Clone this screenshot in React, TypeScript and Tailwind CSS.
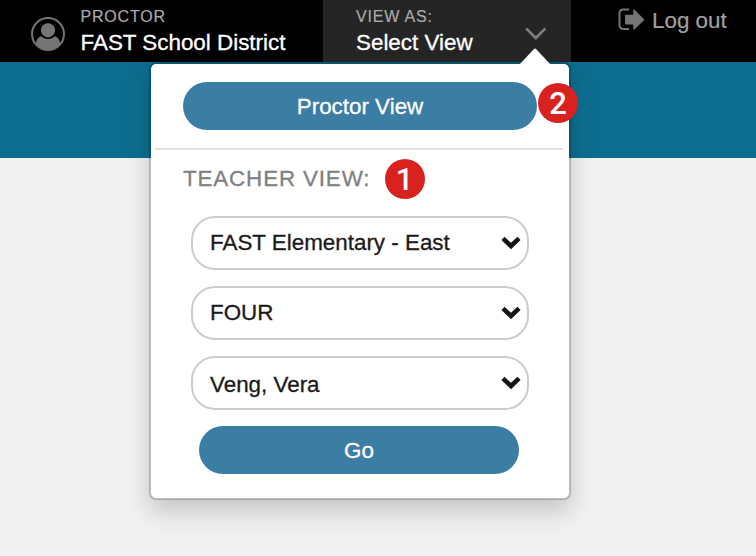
import React from "react";

function UserIcon() {
  return (
    <svg className="block h-[34px] w-[34px] shrink-0" viewBox="0 0 34 34">
      <circle cx="17" cy="17" r="16" fill="none" stroke="#757575" strokeWidth="2" />
      <circle cx="17" cy="13.3" r="7.1" fill="#757575" />
      <path
        d="M4.8 27.5C5.2 22.8 7 20 10.4 19.3C12 21 14.3 21.9 17 21.9C19.7 21.9 22 21 23.6 19.3C27 20 28.8 22.8 29.2 27.5C26.2 31.5 21.8 33.5 17 33.5C12.2 33.5 7.8 31.5 4.8 27.5Z"
        fill="#757575"
      />
    </svg>
  );
}

function LogoutIcon() {
  return (
    <svg className="block h-[23px] w-[27px] shrink-0" viewBox="0 0 27 23">
      <path d="M11 1.6H5.5C2.9 1.6 1.5 3 1.5 5.5V17C1.5 19.5 2.9 21 5.5 21H11" fill="none" stroke="#757575" strokeWidth="2" />
      <path
        d="M8 6.8H15.2V2.4C15.2 1.4 16 1.2 16.6 1.8L25.8 10.9C26.4 11.4 26.4 11.9 25.8 12.4L16.6 21.3C16 21.9 15.2 21.7 15.2 20.7V16.4H8C7.3 16.4 7 16.1 7 15.5V7.7C7 7.1 7.3 6.8 8 6.8Z"
        fill="#757575"
      />
    </svg>
  );
}

function Field({ label, low = false }: { label: string; low?: boolean }) {
  return (
    <div className="flex h-[54px] w-[338px] items-center justify-between rounded-[24px] border-2 border-[#ccc] bg-white pl-[17px] pr-[6px] text-[22.4px] leading-[26px] text-[#1a1a1a] [-webkit-text-stroke:0.3px]">
      <span className={low ? "pt-[3px]" : "pb-px"}>{label}</span>
      <svg className="block h-[14px] w-[20px]" viewBox="0 0 20 14">
        <path d="M2 2.4L10 10L18 2.4" fill="none" stroke="#151515" strokeWidth="4.6" />
      </svg>
    </div>
  );
}

function Badge({ value }: { value: string }) {
  return (
    <span className="flex h-10 w-10 items-center justify-center rounded-full bg-[#d9221f] font-['Roboto','Liberation_Sans',sans-serif] text-[31px] font-medium leading-none text-white">
      {value}
    </span>
  );
}

export default function App() {
  return (
    <div className="relative h-[556px] w-[756px] overflow-hidden bg-[#f1f1f1] font-['Liberation_Sans',Arial,sans-serif]">
      <header className="flex h-[62px] bg-black">
        <div className="flex w-[323px] pl-[31px] pt-[7px]">
          <div className="pt-[10px]">
            <UserIcon />
          </div>
          <div className="pl-[15.5px]">
            <div className="text-[16px] leading-[19px] tracking-[0.8px] text-[#a9a9a9] [-webkit-text-stroke:0.2px]">PROCTOR</div>
            <div className="whitespace-nowrap pt-[4px] text-[22.4px] leading-[26px] text-white [-webkit-text-stroke:0.3px]">FAST School District</div>
          </div>
        </div>
        <div className="flex w-[248px] justify-between bg-[#252525] pl-[33px] pr-[24px] pt-[7px]">
          <div>
            <div className="text-[16px] leading-[19px] tracking-[0.8px] text-[#a9a9a9] [-webkit-text-stroke:0.2px]">VIEW AS:</div>
            <div className="whitespace-nowrap pt-[4px] text-[22.4px] leading-[26px] text-white [-webkit-text-stroke:0.3px]">Select View</div>
          </div>
          <svg className="mt-[19px] block h-[15px] w-[23px]" viewBox="0 0 23 15">
            <path d="M2.2 2.4L11.8 12L21.4 2.4" fill="none" stroke="#7d7d7d" strokeWidth="2.7" />
          </svg>
        </div>
        <div className="flex pl-[47px] pt-[8px]">
          <LogoutIcon />
          <span className="whitespace-nowrap pl-[7px] text-[22.4px] leading-[26px] text-[#a0a0a0] [-webkit-text-stroke:0.2px]">Log out</span>
        </div>
      </header>
      <div className="h-24 bg-[#0d6d8f]" />

      <section className="absolute left-[149px] top-[62px] h-[438px] w-[422px] rounded-[7px] border-2 border-black/20 bg-white bg-clip-padding shadow-[0_12px_24px_rgba(0,0,0,0.18)]">
        <svg className="absolute -top-[16px] left-[368px] block h-[17px] w-[32px]" viewBox="0 0 32 17">
          <path d="M0 17L15 1Q16 0 17 1L32 17Z" fill="#fff" />
        </svg>
        <button className="ml-[32px] mt-[18px] flex h-12 w-[354px] items-center justify-center rounded-full bg-[#3b7da3] pt-px text-[22.4px] leading-[26px] text-white [-webkit-text-stroke:0.3px]">
          Proctor View
        </button>
        <hr className="ml-1 mt-[18px] h-[2px] w-[408px] border-0 bg-[#e2e2e2]" />
        <div className="ml-[32px] mt-[9px] flex h-10 items-center text-[22.4px] leading-[26px] text-[#808080]">
          <span className="w-[201.5px] whitespace-nowrap tracking-[0.85px] [-webkit-text-stroke:0.3px]">TEACHER VIEW:</span>
          <Badge value="1" />
        </div>
        <div className="ml-10 mt-[17px] flex flex-col gap-4">
          <Field label="FAST Elementary - East" />
          <Field label="FOUR" />
          <Field label="Veng, Vera" low />
        </div>
        <button className="ml-12 mt-4 flex h-12 w-[320px] items-center justify-center rounded-full bg-[#3b7da3] pt-px text-[22.4px] leading-[26px] text-white [-webkit-text-stroke:0.3px]">
          Go
        </button>
        <div className="absolute left-[387px] top-[19px]">
          <Badge value="2" />
        </div>
      </section>
    </div>
  );
}
